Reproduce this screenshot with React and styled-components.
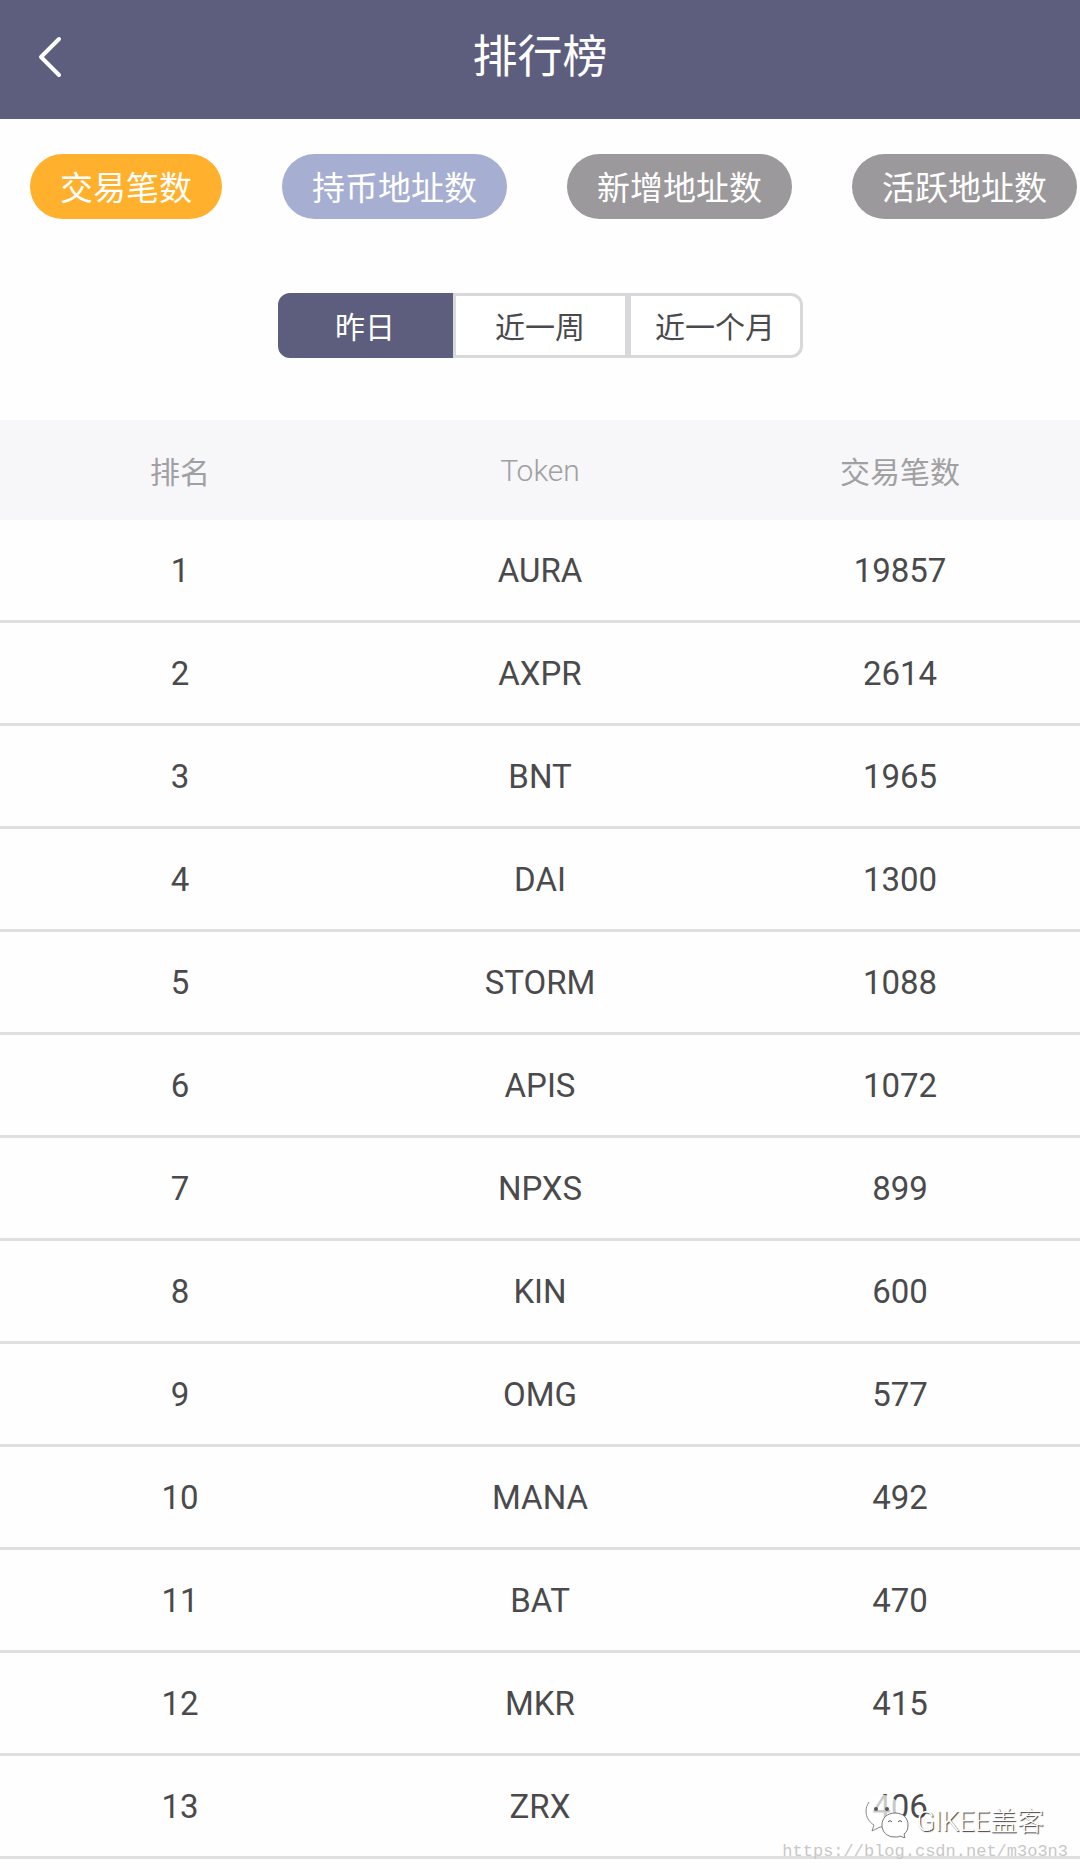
import React, { useState } from "react";
import styled, { createGlobalStyle } from "styled-components";

const GlobalStyle = createGlobalStyle`
  *, *::before, *::after { box-sizing: border-box; }
  body {
    margin: 0;
    background: #fefefe;
    color: #4a4a4c;
    font-family: Roboto, "Noto Sans CJK SC", sans-serif;
  }
  button { font: inherit; border: 0; padding: 0; cursor: pointer; }
`;

const Page = styled.div`
  position: relative;
  padding-bottom: 11px;
  overflow: hidden;
`;

const Header = styled.header`
  display: grid;
  grid-template-columns: 100px 1fr 100px;
  align-items: center;
  height: 119px;
  padding-bottom: 4px;
  background: #5d5d7d;
  color: #fff;
`;

const BackButton = styled.button`
  display: flex;
  align-items: center;
  justify-content: center;
  height: 100px;
  background: none;
  color: #fff;
`;

const Title = styled.h1`
  margin: 0;
  font-size: 45px;
  font-weight: 400;
  line-height: 60px;
  text-align: center;
`;

const Metrics = styled.nav`
  display: flex;
  gap: 60px;
  padding: 35px 0 0 30px;
  overflow: hidden;
`;

const Pill = styled.button`
  flex: none;
  height: 65px;
  padding: 4px 30px 0;
  border-radius: 33px;
  background: ${(p) => p.$color};
  color: #fff;
  font-size: 33px;
  line-height: 61px;
  white-space: nowrap;
`;

const Periods = styled.div`
  display: flex;
  justify-content: center;
  padding: 74px 0 62px;
`;

const Period = styled.button`
  width: 175px;
  height: 65px;
  padding-top: 4px;
  border: 3px solid ${(p) => (p.$active ? "#5d5d7d" : "#d8d8da")};
  background: ${(p) => (p.$active ? "#5d5d7d" : "#fff")};
  color: ${(p) => (p.$active ? "#fff" : "#4a4a4c")};
  font-size: 30px;
  line-height: 55px;

  &:first-child { border-radius: 12px 0 0 12px; }
  &:last-child { border-radius: 0 12px 12px 0; }
`;

const Table = styled.table`
  width: 100%;
  table-layout: fixed;
  border-collapse: separate;
  border-spacing: 0;
  text-align: center;
`;

const HeadCell = styled.th`
  height: 100px;
  padding: 0;
  background: #f7f6f9;
  color: #a0a0a2;
  font-size: 30px;
  font-weight: ${(p) => (p.$light ? 300 : 400)};
`;

const Cell = styled.td`
  height: 103px;
  padding: 1px 0 0;
  border-bottom: 3px solid #dfdfdf;
  font-size: 33px;
`;

const Watermark = styled.div`
  position: absolute;
  right: 12px;
  bottom: 10px;
  display: flex;
  flex-direction: column;
  align-items: flex-end;
  pointer-events: none;
`;

const Account = styled.div`
  display: flex;
  align-items: flex-start;
  gap: 8px;
  padding-right: 24px;
`;

const AccountName = styled.span`
  padding-top: 6px;
  color: #fff;
  font-size: 27px;
  font-weight: 300;
  line-height: 44px;
  text-shadow: 1px 1px 1px #3c3c40;
`;

const Source = styled.div`
  color: #c8c8c8;
  font-family: "Liberation Mono", monospace;
  font-size: 17px;
  line-height: 16px;
`;

const metrics = [
  { name: "交易笔数", color: "#ffb02c" },
  { name: "持币地址数", color: "#a6aed2" },
  { name: "新增地址数", color: "#9b999b" },
  { name: "活跃地址数", color: "#9b999b" },
];

const periods = ["昨日", "近一周", "近一个月"];

const tokens = [
  ["AURA", 19857],
  ["AXPR", 2614],
  ["BNT", 1965],
  ["DAI", 1300],
  ["STORM", 1088],
  ["APIS", 1072],
  ["NPXS", 899],
  ["KIN", 600],
  ["OMG", 577],
  ["MANA", 492],
  ["BAT", 470],
  ["MKR", 415],
  ["ZRX", 406],
];

function BackIcon() {
  return (
    <svg width="24" height="44" viewBox="0 0 24 44" fill="none" aria-hidden="true">
      <path d="M21 3 3 21l18 18" stroke="currentColor" strokeWidth="4" strokeLinecap="round" strokeLinejoin="round" />
    </svg>
  );
}

function ChatIcon() {
  return (
    <svg width="44" height="44" viewBox="0 0 44 44" aria-hidden="true">
      <path
        d="M18 1C8 1 1 8 1 17c0 6 3 11 8 14l-2 6 8-4h7c8-2 13-8 13-16C35 8 28 1 18 1Z"
        fill="#fff"
        fillOpacity="0.7"
      />
      <path d="M1 17c0 6 3 11 8 14l-2 6 8-4h4M1 17c0-3 1-6 3-9" fill="none" stroke="#88888c" strokeWidth="1" />
      <path
        d="M30 19c-8 0-13 5-13 12s5 12 13 12c2 0 4 0 5-1l5 2-1-4c3-2 4-5 4-9 0-7-5-12-13-12Z"
        fill="#fff"
        stroke="#77777b"
        strokeWidth="1"
        strokeLinejoin="round"
      />
      <g fill="#55555a">
        <circle cx="11" cy="15" r="2" />
        <circle cx="22" cy="15" r="2" />
      </g>
      <path d="M23 28q2-3 4 0M33 28q2-3 4 0" fill="none" stroke="#55555a" strokeWidth="1" />
    </svg>
  );
}

export default function App() {
  const [period, setPeriod] = useState(periods[0]);

  return (
    <Page>
      <GlobalStyle />
      <Header>
        <BackButton aria-label="返回">
          <BackIcon />
        </BackButton>
        <Title>排行榜</Title>
      </Header>
      <Metrics>
        {metrics.map((m) => (
          <Pill key={m.name} $color={m.color}>{m.name}</Pill>
        ))}
      </Metrics>
      <Periods>
        {periods.map((name) => (
          <Period key={name} $active={name === period} onClick={() => setPeriod(name)}>
            {name}
          </Period>
        ))}
      </Periods>
      <Table>
        <thead>
          <tr>
            <HeadCell scope="col">排名</HeadCell>
            <HeadCell scope="col" $light>Token</HeadCell>
            <HeadCell scope="col">交易笔数</HeadCell>
          </tr>
        </thead>
        <tbody>
          {tokens.map(([name, count], i) => (
            <tr key={name}>
              <Cell>{i + 1}</Cell>
              <Cell>{name}</Cell>
              <Cell>{count}</Cell>
            </tr>
          ))}
        </tbody>
      </Table>
      <Watermark>
        <Account>
          <ChatIcon />
          <AccountName>GIKEE盖客</AccountName>
        </Account>
        <Source>https://blog.csdn.net/m3o3n3</Source>
      </Watermark>
    </Page>
  );
}
